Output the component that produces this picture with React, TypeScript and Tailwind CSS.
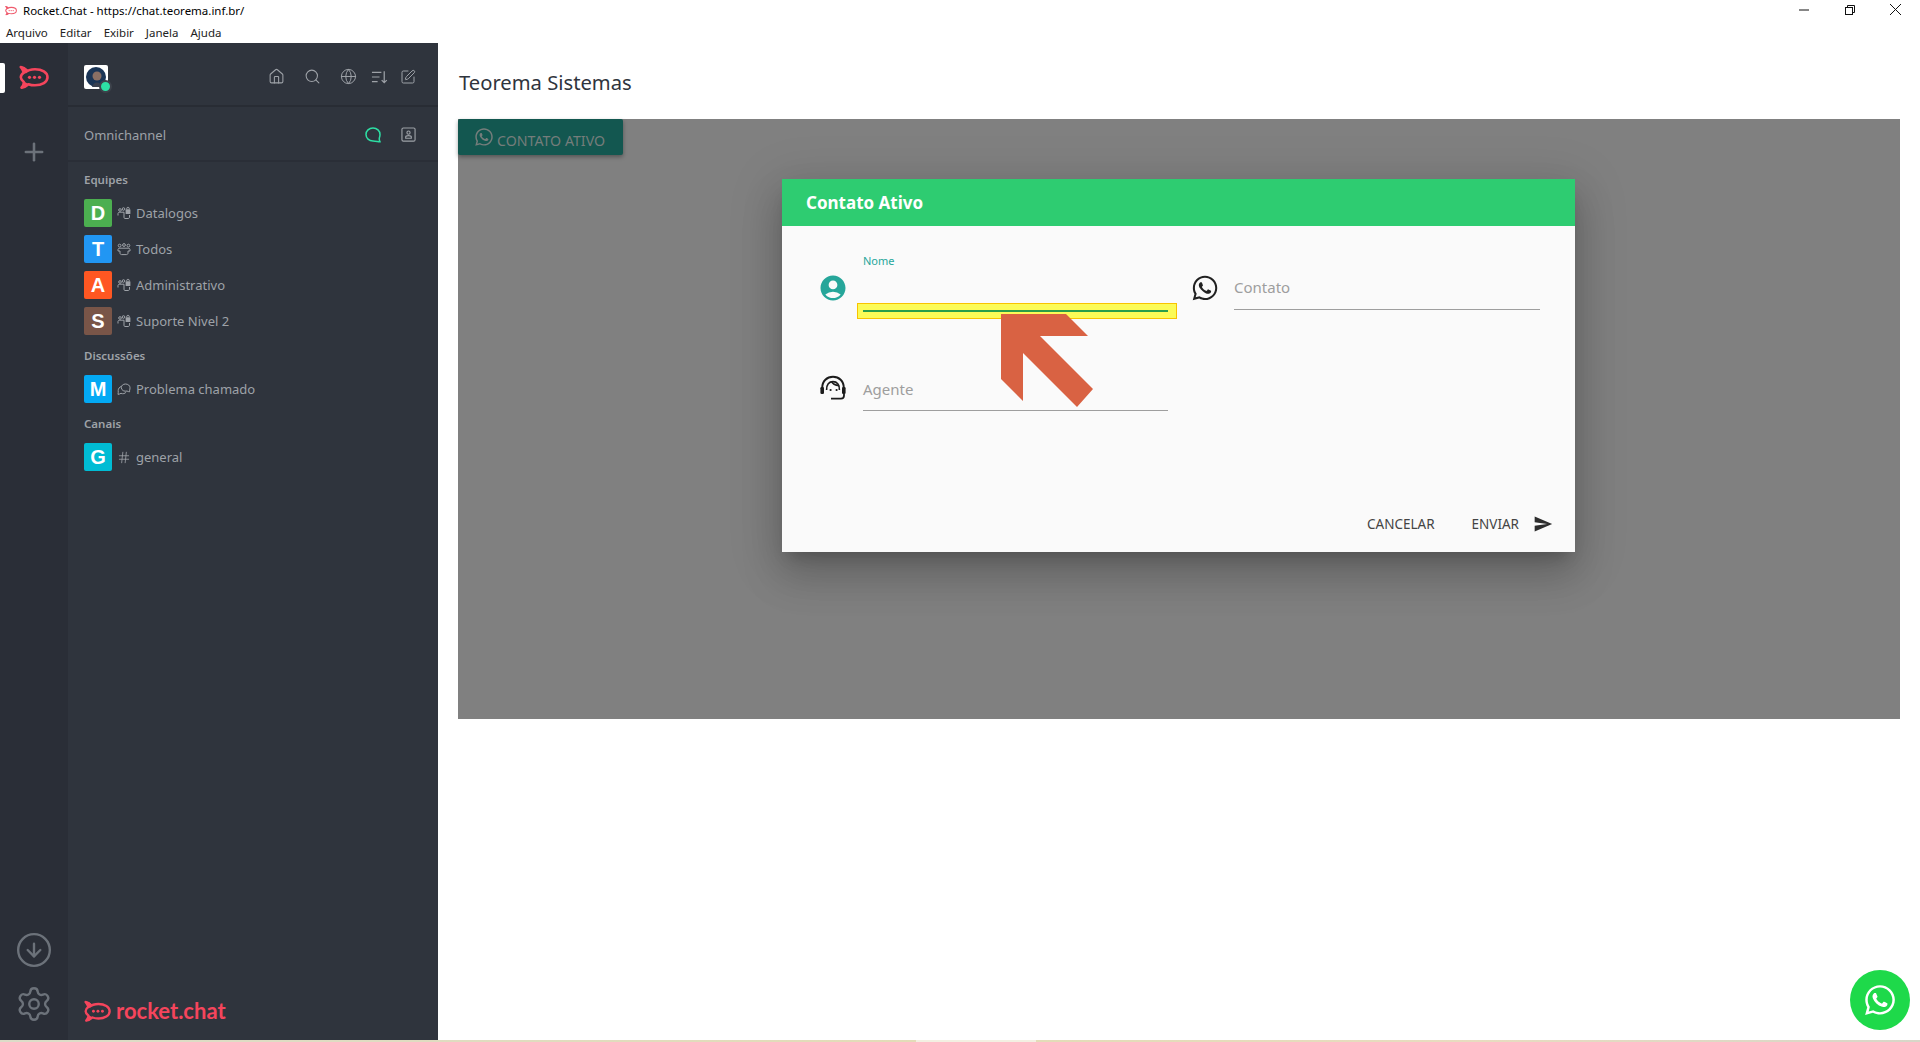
import React from "react";
import { FaWhatsapp } from "react-icons/fa";
import { MdAccountCircle, MdSend } from "react-icons/md";
import { Home, Search, Globe, SquarePen, Plus, Settings, CircleArrowDown, Hash } from "lucide-react";

const font = "font-['Noto_Sans','Open_Sans',sans-serif]";

function RocketLogo({ className = "", color = "#f5455c" }: { className?: string; color?: string }) {
  return (
    <svg viewBox="0 0 30 24" className={className} fill="none">
      <path d="M6 7.5 C9 4.8 13 4.2 16 4.2 C23 4.2 28.5 7.5 28.5 12.3 C28.5 17 23 20.3 16 20.3 C13.5 20.3 11.5 20 9.5 19.2 C7.5 21 5 22.3 2.5 22.6 C4.2 20.8 5 19 4.8 17 C3 15.6 1.8 14 1.8 12.3 C1.8 10.5 3 8.8 4.8 7.6 C4.4 5.8 3.4 4 1.8 2 C4 2.4 6 3.6 7.6 5.6" stroke={color} strokeWidth="2.6" strokeLinejoin="round" />
      <path d="M1.2 1.2 C5 1.6 8 3.4 9.6 5.6 L5.6 9 C5 6.4 3.4 3.8 1.2 1.2 Z" fill={color} />
      <path d="M1.6 23.4 C4.4 21.4 5.4 19 5 16.4 L9.8 19.2 C8 21.8 5 23.4 1.6 23.4 Z" fill={color} />
      <circle cx="10.5" cy="12.3" r="1.6" fill={color} />
      <circle cx="15.5" cy="12.3" r="1.6" fill={color} />
      <circle cx="20.5" cy="12.3" r="1.6" fill={color} />
    </svg>
  );
}

function TeamIcon() {
  return (
    <svg viewBox="0 0 14 14" className="w-[14px] h-[14px] shrink-0" fill="none" stroke="#9ea2a8" strokeWidth="1">
      <circle cx="3" cy="4" r="1.3" />
      <circle cx="6.5" cy="3" r="1.3" />
      <path d="M1 9.5 V7.5 C1 6.6 1.7 6.2 3 6.2 H7 V11.5 C7 12 7.4 12.5 8 12.5 H11 C12 12.5 12.5 12 12.5 11 V9" />
      <rect x="8.6" y="3.2" width="4.8" height="4.8" rx="0.6" fill="#9ea2a8" stroke="none" />
      <path d="M9.8 3.2 V2.2 C9.8 1 12.2 1 12.2 2.2 V3.2" />
    </svg>
  );
}

function TeamPublicIcon() {
  return (
    <svg viewBox="0 0 14 14" className="w-[14px] h-[14px] shrink-0" fill="none" stroke="#9ea2a8" strokeWidth="1">
      <circle cx="2.6" cy="3.6" r="1.4" />
      <circle cx="7" cy="3" r="1.4" />
      <circle cx="11.4" cy="3.6" r="1.4" />
      <path d="M1 9 V7.6 C1 6.6 1.6 6.2 3 6.2 H11 C12.4 6.2 13 6.6 13 7.6 V9 H11 V11 C11 12 10.4 12.6 9.4 12.6 H4.6 C3.6 12.6 3 12 3 11 V9 Z" />
    </svg>
  );
}

function DiscussionIcon() {
  return (
    <svg viewBox="0 0 14 14" className="w-[14px] h-[14px] shrink-0" fill="none" stroke="#9ea2a8" strokeWidth="1">
      <path d="M8.5 2 C11 2 13 3.6 13 5.7 C13 7.8 12.3 8.6 12.6 9.8 C11.6 9.8 10.8 9.4 10 9 C7.6 9.8 4.3 8.4 4.3 5.7 C4.3 3.6 6 2 8.5 2 Z" />
      <path d="M4.3 4.4 C2.4 5.2 1.2 6.6 1.2 8.6 C1.2 9.8 1.4 11 1 12.4 C2.2 12.2 3.2 11.8 4 11.3 C6 12.2 8 11.6 9.2 10" />
    </svg>
  );
}

function SortIcon() {
  return (
    <svg viewBox="0 0 18 16" className="w-[17px] h-[16px]" fill="none" stroke="#9ea2a8" strokeWidth="1.3">
      <path d="M1 3 H11 M1 8 H9 M1 13 H7" />
      <path d="M14 2 V14 M11.3 11.3 L14 14 L16.7 11.3" />
    </svg>
  );
}

function ContactBookIcon() {
  return (
    <svg viewBox="0 0 16 16" className="w-[15px] h-[15px]" fill="none" stroke="#9ea2a8" strokeWidth="1.2">
      <rect x="1" y="1" width="14" height="14" rx="1.5" />
      <circle cx="8" cy="6" r="1.7" />
      <path d="M5 12 V10.6 C5 9.6 5.8 9.2 8 9.2 C10.2 9.2 11 9.6 11 10.6 V12 Z" />
    </svg>
  );
}

function BubbleIcon() {
  return (
    <svg viewBox="0 0 16 16" className="w-[16px] h-[16px]" fill="none" stroke="#2de0a5" strokeWidth="1.5">
      <path d="M8 1 C4 1 1 3.8 1 7.5 C1 11.2 4 14 8 14 C10.5 14 14 15 15 14.8 C14.4 13.6 14 12.4 14.4 10.8 C14.8 9.8 15 8.6 15 7.5 C15 3.8 12 1 8 1 Z" />
    </svg>
  );
}

function HeadsetIcon() {
  return (
    <svg viewBox="0 0 28 26" className="w-[28px] h-[26px] shrink-0" fill="none" stroke="#1c1c1c">
      <path d="M3.2 13 C3.2 6 8 1.8 14 1.8 C20 1.8 24.8 6 24.8 13" strokeWidth="2" />
      <path d="M7.6 15 C7.4 9.6 10 6.6 14 6.6 C18 6.6 20.6 9.4 20.4 15" strokeWidth="1.6" />
      <path d="M12.6 6.4 C13.6 9 16.6 10.2 20.2 10.6" strokeWidth="1.6" />
      <rect x="1.4" y="12" width="3.6" height="7" rx="1.2" fill="#1c1c1c" stroke="none" />
      <rect x="23" y="12" width="3.6" height="7" rx="1.2" fill="#1c1c1c" stroke="none" />
      <path d="M25 19 V20.5 C25 22.6 24 23.6 22 23.6 H12" strokeWidth="1.8" />
      <circle cx="11.6" cy="15" r="1.1" fill="#1c1c1c" stroke="none" />
      <circle cx="17.6" cy="15" r="1.1" fill="#1c1c1c" stroke="none" />
    </svg>
  );
}

function Avatar({ letter, color }: { letter: string; color: string }) {
  return (
    <div style={{ backgroundColor: color }} className="w-[28px] h-[28px] rounded-[2px] flex items-center justify-center text-white text-[20px] leading-none font-['Liberation_Sans',sans-serif] font-bold shrink-0">
      {letter}
    </div>
  );
}

function Row({ letter, color, icon, label }: { letter: string; color: string; icon: React.ReactNode; label: string }) {
  return (
    <div className="h-[36px] flex items-center pl-[16px]">
      <Avatar letter={letter} color={color} />
      <div className="ml-[5px] w-[14px] flex items-center">{icon}</div>
      <span className="ml-[5px] text-[13px] text-[#9ea2a8] leading-none">{label}</span>
    </div>
  );
}

function GroupTitle({ children }: { children: React.ReactNode }) {
  return <div className="h-[20px] pl-[16px] flex items-center text-[11.5px] font-semibold text-[#9ea2a8]">{children}</div>;
}

export default function App() {
  return (
    <div className={`${font} w-[1920px] h-[1042px] flex flex-col overflow-hidden bg-white relative`}>
      {/* Title bar */}
      <div className="h-[21px] flex items-center bg-white shrink-0">
        <RocketLogo className="w-[12px] h-[11px] ml-[5px]" color="#ef5b6d" />
        <span className="ml-[6px] text-[11.5px] text-black leading-none pt-[1px]">Rocket.Chat - https://chat.teorema.inf.br/</span>
        <div className="ml-auto flex items-center -mt-[2px]">
          <svg viewBox="0 0 10 10" className="w-[10px] h-[10px] mr-[36px]"><path d="M0 5 H10" stroke="#111" strokeWidth="1" /></svg>
          <svg viewBox="0 0 10 10" className="w-[10px] h-[10px] mr-[35px]" fill="none" stroke="#111" strokeWidth="1"><rect x="0.5" y="2.5" width="7" height="7" /><path d="M2.5 2.5 V0.5 H9.5 V7.5 H7.5" /></svg>
          <svg viewBox="0 0 10 10" className="w-[11px] h-[11px] mr-[19px]" fill="none" stroke="#111" strokeWidth="0.9"><path d="M0 0 L10 10 M10 0 L0 10" /></svg>
        </div>
      </div>
      {/* Menu bar */}
      <div className="h-[22px] flex items-center gap-[12px] pl-[6px] pt-[2px] text-[11.5px] text-[#222] bg-white shrink-0">
        <span>Arquivo</span><span>Editar</span><span>Exibir</span><span>Janela</span><span>Ajuda</span>
      </div>

      <div className="flex flex-1 min-h-0">
        {/* Rail */}
        <aside className="w-[68px] bg-[#2a2e37] flex flex-col items-center relative shrink-0">
          <div className="absolute left-0 top-[20px] w-[5px] h-[30px] bg-white rounded-r-[2px]" />
          <RocketLogo className="w-[30px] h-[26px] mt-[21px]" />
          <Plus className="mt-[48px] w-[28px] h-[28px] text-[#6c727a]" strokeWidth={2.2} />
          <div className="mt-auto flex flex-col items-center gap-[16px] mb-[17px]">
            <CircleArrowDown className="w-[38px] h-[38px] text-[#6c727a]" strokeWidth={1.5} />
            <Settings className="w-[38px] h-[38px] text-[#6c727a]" strokeWidth={1.5} />
          </div>
        </aside>

        {/* Sidebar */}
        <aside className="w-[370px] bg-[#2f343d] flex flex-col shrink-0">
          <div className="h-[64px] flex items-center pl-[16px] pr-[22px] pt-[5px] border-b-2 border-[#282c34] shrink-0">
            <div className="w-[24px] h-[24px] bg-white rounded-[2px] relative flex items-center justify-center">
              <svg viewBox="0 0 24 24" className="w-[24px] h-[24px]">
                <circle cx="12" cy="12" r="10" fill="#1b3556" />
                <circle cx="13" cy="11" r="4.5" fill="#8a6f64" />
                <path d="M8 22 C9 16 17 16 18 22 Z" fill="#3a4150" />
              </svg>
              <span className="absolute right-[-4px] bottom-[-4px] w-[13px] h-[13px] rounded-full bg-[#2de0a5] border-2 border-[#3d424b]" />
            </div>
            <div className="ml-auto flex items-center text-[#9ea2a8]">
              <Home className="w-[17px] h-[17px]" strokeWidth={1.5} />
              <Search className="ml-[19px] w-[17px] h-[17px]" strokeWidth={1.5} />
              <Globe className="ml-[19px] w-[17px] h-[17px]" strokeWidth={1.4} />
              <div className="ml-[14px]"><SortIcon /></div>
              <SquarePen className="ml-[12px] w-[16px] h-[16px]" strokeWidth={1.5} />
            </div>
          </div>
          <div className="h-[55px] flex items-center pl-[16px] pr-[22px] pt-[2px] border-b-2 border-[#2a2e37] shrink-0">
            <span className="text-[13px] text-[#9ea2a8] pt-[3px]">Omnichannel</span>
            <div className="ml-auto flex items-center gap-[20px]">
              <BubbleIcon />
              <ContactBookIcon />
            </div>
          </div>
          <div className="pt-[8px]">
            <GroupTitle>Equipes</GroupTitle>
            <div className="pt-[5px]">
              <Row letter="D" color="#4caf50" icon={<TeamIcon />} label="Datalogos" />
              <Row letter="T" color="#2196f3" icon={<TeamPublicIcon />} label="Todos" />
              <Row letter="A" color="#ff5722" icon={<TeamIcon />} label="Administrativo" />
              <Row letter="S" color="#795548" icon={<TeamIcon />} label="Suporte Nivel 2" />
            </div>
            <div className="mt-[7px]"><GroupTitle>Discussões</GroupTitle></div>
            <div className="pt-[5px]">
              <Row letter="M" color="#03a9f4" icon={<DiscussionIcon />} label="Problema chamado" />
            </div>
            <div className="mt-[7px]"><GroupTitle>Canais</GroupTitle></div>
            <div className="pt-[5px]">
              <Row letter="G" color="#00bcd4" icon={<Hash className="w-[15px] h-[15px] text-[#9ea2a8]" strokeWidth={1.4} />} label="general" />
            </div>
          </div>
          <div className="mt-auto pl-[16px] pb-[17px] flex items-center">
            <RocketLogo className="w-[27px] h-[24px]" />
            <span className="ml-[5px] font-['Lato',sans-serif] font-bold text-[22px] leading-none text-[#f5455c]">rocket.chat</span>
          </div>
        </aside>

        {/* Main */}
        <main className="flex-1 min-w-0 pl-[20px] pr-[20px] relative">
          <h1 className="h-[76px] pt-[2px] pl-[1px] flex items-center text-[20.2px] text-[#2f343d] font-normal">Teorema Sistemas</h1>
          <div className="relative h-[600px] bg-[#808080]">
            <div className="w-[165px] h-[36px] bg-[#135750] rounded-[2px] shadow-[0_2px_4px_rgba(0,0,0,0.35)] flex items-center pl-[16px] text-[#757d7b] text-[14.2px]">
              <FaWhatsapp className="w-[20px] h-[20px] -mt-[1px]" />
              <span className="ml-[3px] pt-[8px]">CONTATO ATIVO</span>
            </div>

            {/* Dialog */}
            <div className="absolute left-[324px] top-[60px] w-[793px] h-[373px] bg-[#fafafa] flex flex-col shadow-[0_11px_15px_-7px_rgba(0,0,0,0.2),0_24px_38px_3px_rgba(0,0,0,0.14),0_9px_46px_8px_rgba(0,0,0,0.12)]">
              <div className="h-[47px] bg-[#2ecc71] flex items-center pl-[24px] text-white font-bold text-[17px] shrink-0">Contato Ativo</div>
              <div className="flex-1 relative">
                <div className="grid grid-cols-[372px_372px] pl-[36px] pt-[30px] gap-x-0 gap-y-[59px]">
                  <div className="flex items-start">
                    <MdAccountCircle className="w-[30px] h-[30px] text-[#26a69a] mt-[17px] shrink-0" />
                    <div className="ml-[15px] w-[305px]">
                      <div className="text-[11px] leading-[14px] text-[#26a69a] h-[14px] -mt-[2px]">Nome</div>
                      <div className="h-[42px] relative">
                        <div className="absolute -left-[6px] top-[35px] w-[320px] h-[16px] bg-[#fbfb57] border border-[#f8c300] flex items-center justify-center">
                          <div className="w-[305px] h-[2px] bg-[#2a9d4a] -ml-[3px]" />
                        </div>
                      </div>
                    </div>
                  </div>
                  <div className="flex items-start pl-[1px]">
                    <FaWhatsapp className="w-[28px] h-[28px] text-[#212121] mt-[18px] shrink-0" />
                    <div className="ml-[15px] w-[306px] h-[44px] mt-[10px] border-b border-[#9e9e9e] flex items-center text-[15px] text-[#9e9e9e]">Contato</div>
                  </div>
                  <div className="flex items-start">
                    <div className="w-[30px] mt-[6px] flex justify-center shrink-0"><HeadsetIcon /></div>
                    <div className="ml-[15px] w-[305px] h-[42px] border-b border-[#9e9e9e] flex items-center text-[15px] text-[#9e9e9e]">Agente</div>
                  </div>
                </div>
                <div className="absolute right-[22px] bottom-[18px] flex items-center text-[13.5px] text-[#444]">
                  <span>CANCELAR</span>
                  <span className="ml-[37px]">ENVIAR</span>
                  <MdSend className="ml-[14px] w-[20px] h-[20px] text-[#2d2d2d]" />
                </div>
                {/* Annotation arrow */}
                <svg className="absolute left-[219px] top-[88px] w-[92px] h-[93px]" viewBox="0 0 92 93">
                  <polygon points="0,0 65,0 87,22 39,22 92,75 76,93 22,39 22,87 0,65" fill="#d96243" />
                </svg>
              </div>
            </div>
          </div>
        </main>
      </div>

      {/* Bottom strip */}
      <div className="h-[2px] shrink-0 flex">
        <div className="w-[916px] bg-gradient-to-r from-[#dcdcc8] to-[#e3dcb8]" />
        <div className="w-[120px] bg-[#f3f0e2]" />
        <div className="flex-1 bg-gradient-to-r from-[#e3dcb8] via-[#e8dcc0] to-[#d8d6c8]" />
      </div>

      {/* WhatsApp floating button */}
      <div className="absolute left-[1850px] top-[970px] w-[60px] h-[60px] rounded-full bg-[#1ed94a] flex items-center justify-center text-white">
        <FaWhatsapp className="w-[34px] h-[34px]" />
      </div>
    </div>
  );
}
